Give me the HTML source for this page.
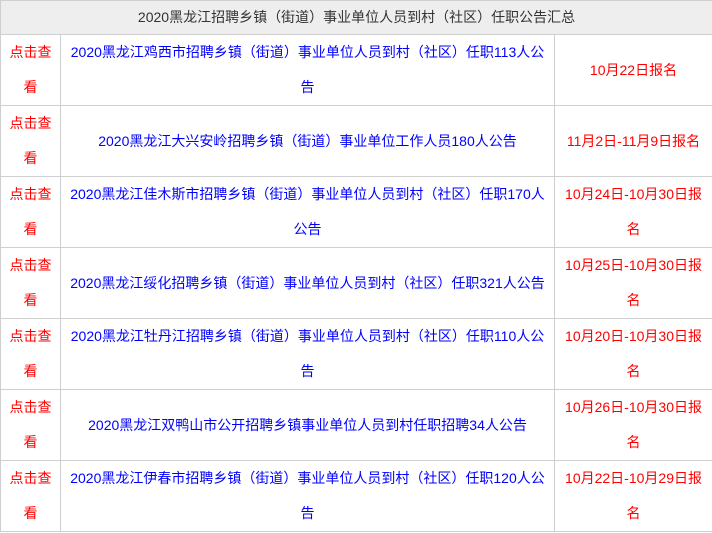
<!DOCTYPE html>
<html><head><meta charset="utf-8"><style>
body{margin:0;width:712px;height:533px;background:#fff;font-family:"Liberation Sans","Noto Sans CJK SC",sans-serif;font-size:14px;overflow:hidden}
table{border-collapse:collapse;width:712px;table-layout:fixed;position:absolute;left:0;top:0}
td{border:1px solid #cfcfcf;text-align:center;line-height:35px;padding:0;vertical-align:middle;overflow:hidden}
th{border:1px solid #cfcfcf;background:#eeeeee;color:#333;font-weight:normal;height:33px;line-height:33px;padding:0}
tr.r td{height:70px}
.a{color:#f00}
.b{color:#00f}
.c{color:#f00}
</style></head><body>
<table>
<colgroup><col style="width:60px"><col style="width:494px"><col style="width:158px"></colgroup>
<tr><th colspan="3">2020黑龙江招聘乡镇（街道）事业单位人员到村（社区）任职公告汇总</th></tr>
<tr class="r"><td class="a">点击查<br>看</td><td class="b">2020黑龙江鸡西市招聘乡镇（街道）事业单位人员到村（社区）任职113人公<br>告</td><td class="c">10月22日报名</td></tr>
<tr class="r"><td class="a">点击查<br>看</td><td class="b">2020黑龙江大兴安岭招聘乡镇（街道）事业单位工作人员180人公告</td><td class="c">11月2日-11月9日报名</td></tr>
<tr class="r"><td class="a">点击查<br>看</td><td class="b">2020黑龙江佳木斯市招聘乡镇（街道）事业单位人员到村（社区）任职170人<br>公告</td><td class="c">10月24日-10月30日报<br>名</td></tr>
<tr class="r"><td class="a">点击查<br>看</td><td class="b">2020黑龙江绥化招聘乡镇（街道）事业单位人员到村（社区）任职321人公告</td><td class="c">10月25日-10月30日报<br>名</td></tr>
<tr class="r"><td class="a">点击查<br>看</td><td class="b">2020黑龙江牡丹江招聘乡镇（街道）事业单位人员到村（社区）任职110人公<br>告</td><td class="c">10月20日-10月30日报<br>名</td></tr>
<tr class="r"><td class="a">点击查<br>看</td><td class="b">2020黑龙江双鸭山市公开招聘乡镇事业单位人员到村任职招聘34人公告</td><td class="c">10月26日-10月30日报<br>名</td></tr>
<tr class="r"><td class="a">点击查<br>看</td><td class="b">2020黑龙江伊春市招聘乡镇（街道）事业单位人员到村（社区）任职120人公<br>告</td><td class="c">10月22日-10月29日报<br>名</td></tr>
</table>
</body></html>
